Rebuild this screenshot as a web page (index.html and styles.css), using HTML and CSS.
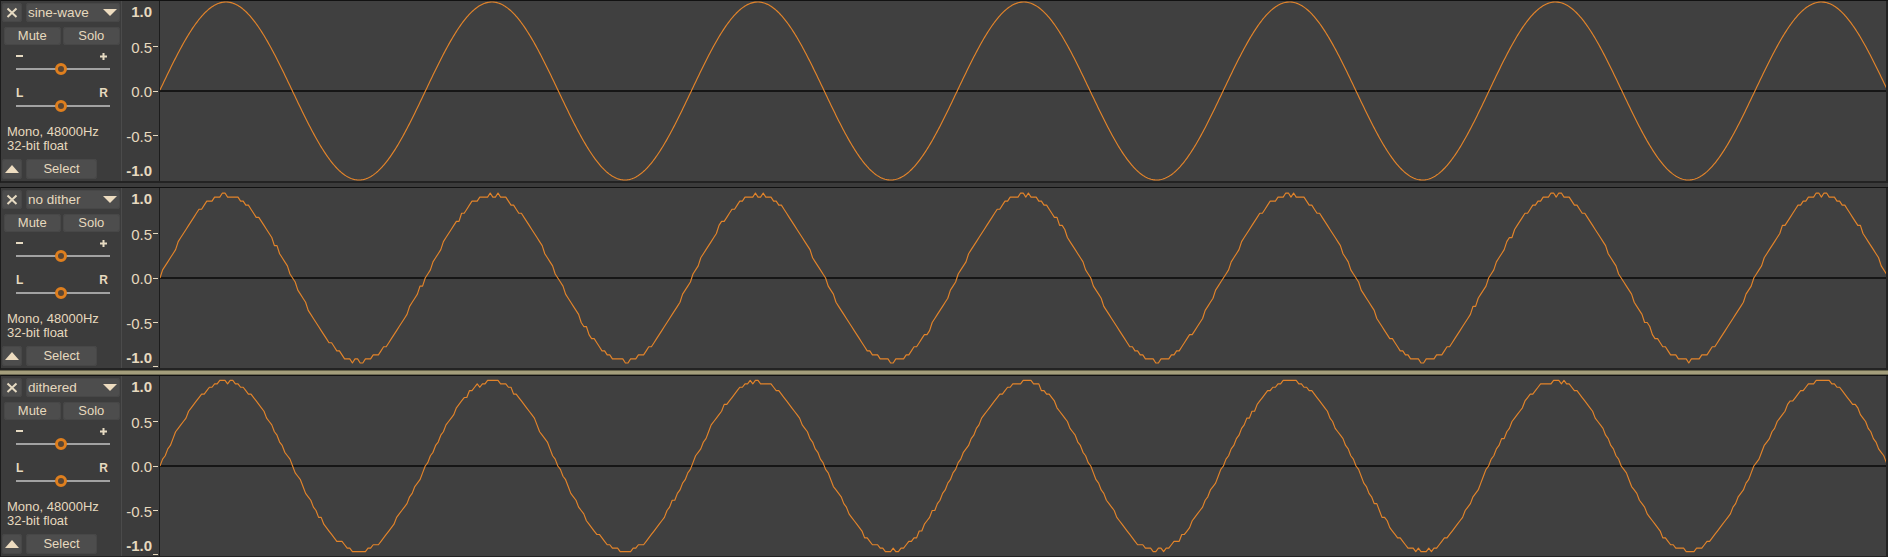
FILE: index.html
```html
<!DOCTYPE html>
<html>
<head>
<meta charset="utf-8">
<link rel="stylesheet" href="styles.css">
</head>
<body>
<div class="tracks">

  <div class="track">
    <div class="info">
      <div class="row row-top">
        <div class="btn close"><svg width="20" height="19" viewBox="0 0 20 19"><path d="M5.5 5.5 L14.5 14 M14.5 5.5 L5.5 14" stroke="#e6dac2" stroke-width="2" fill="none"/></svg></div>
        <div class="btn name"><span class="name-text">sine-wave</span><svg class="dd" width="14" height="8" viewBox="0 0 14 8"><polygon points="0,0 14,0 7,7" fill="#eddcc0"/></svg></div>
      </div>
      <div class="row row-ms">
        <div class="btn ms">Mute</div>
        <div class="btn ms solo">Solo</div>
      </div>
      <div class="slider-labels gain-labels">
        <svg width="7" height="2"><rect width="7" height="2" fill="#e6dac2"/></svg>
        <svg width="7" height="7"><rect y="2.5" width="7" height="2" fill="#e6dac2"/><rect x="2.5" width="2" height="7" fill="#e6dac2"/></svg>
      </div>
      <div class="slider"><div class="bar"></div><span class="thumb"></span></div>
      <div class="slider-labels pan-labels"><span>L</span><span>R</span></div>
      <div class="slider"><div class="bar"></div><span class="thumb"></span></div>
      <div class="fmt">Mono, 48000Hz<br>32-bit float</div>
      <div class="row row-bottom">
        <div class="btn collapse"><svg width="14" height="8" viewBox="0 0 14 8"><polygon points="0,8 14,8 7,0" fill="#eddcc0"/></svg></div>
        <div class="btn select">Select</div>
      </div>
    </div>
    <div class="vruler">
      <span class="lbl major l-top">1.0</span>
      <span class="lbl l-p5">0.5</span>
      <span class="lbl l-0">0.0</span>
      <span class="lbl l-m5">-0.5</span>
      <span class="lbl major l-bot">-1.0</span>
      <i class="tick t-p5"></i><i class="tick t-0"></i><i class="tick t-m5"></i>
    </div>
    <div class="wave"><svg class="wave-svg" data-type="clean" width="1726" height="180" viewBox="0 0 1726 180"><rect class="zero" x="0" y="89" width="1726" height="2"/><path class="sig" d=""/></svg></div>
  </div>

  <div class="track no-gap">
    <div class="info">
      <div class="row row-top">
        <div class="btn close"><svg width="20" height="19" viewBox="0 0 20 19"><path d="M5.5 5.5 L14.5 14 M14.5 5.5 L5.5 14" stroke="#e6dac2" stroke-width="2" fill="none"/></svg></div>
        <div class="btn name"><span class="name-text">no dither</span><svg class="dd" width="14" height="8" viewBox="0 0 14 8"><polygon points="0,0 14,0 7,7" fill="#eddcc0"/></svg></div>
      </div>
      <div class="row row-ms">
        <div class="btn ms">Mute</div>
        <div class="btn ms solo">Solo</div>
      </div>
      <div class="slider-labels gain-labels">
        <svg width="7" height="2"><rect width="7" height="2" fill="#e6dac2"/></svg>
        <svg width="7" height="7"><rect y="2.5" width="7" height="2" fill="#e6dac2"/><rect x="2.5" width="2" height="7" fill="#e6dac2"/></svg>
      </div>
      <div class="slider"><div class="bar"></div><span class="thumb"></span></div>
      <div class="slider-labels pan-labels"><span>L</span><span>R</span></div>
      <div class="slider"><div class="bar"></div><span class="thumb"></span></div>
      <div class="fmt">Mono, 48000Hz<br>32-bit float</div>
      <div class="row row-bottom">
        <div class="btn collapse"><svg width="14" height="8" viewBox="0 0 14 8"><polygon points="0,8 14,8 7,0" fill="#eddcc0"/></svg></div>
        <div class="btn select">Select</div>
      </div>
    </div>
    <div class="vruler">
      <span class="lbl major l-top">1.0</span>
      <span class="lbl l-p5">0.5</span>
      <span class="lbl l-0">0.0</span>
      <span class="lbl l-m5">-0.5</span>
      <span class="lbl major l-bot">-1.0</span>
      <i class="tick t-p5"></i><i class="tick t-0"></i><i class="tick t-m5"></i><i class="tick t-bot"></i>
    </div>
    <div class="wave"><svg class="wave-svg" data-type="nodither" width="1726" height="180" viewBox="0 0 1726 180"><rect class="zero" x="0" y="89" width="1726" height="2"/><path class="sig" d=""/></svg></div>
  </div>

  <div class="focus-band"></div>

  <div class="track last">
    <div class="info">
      <div class="row row-top">
        <div class="btn close"><svg width="20" height="19" viewBox="0 0 20 19"><path d="M5.5 5.5 L14.5 14 M14.5 5.5 L5.5 14" stroke="#e6dac2" stroke-width="2" fill="none"/></svg></div>
        <div class="btn name"><span class="name-text">dithered</span><svg class="dd" width="14" height="8" viewBox="0 0 14 8"><polygon points="0,0 14,0 7,7" fill="#eddcc0"/></svg></div>
      </div>
      <div class="row row-ms">
        <div class="btn ms">Mute</div>
        <div class="btn ms solo">Solo</div>
      </div>
      <div class="slider-labels gain-labels">
        <svg width="7" height="2"><rect width="7" height="2" fill="#e6dac2"/></svg>
        <svg width="7" height="7"><rect y="2.5" width="7" height="2" fill="#e6dac2"/><rect x="2.5" width="2" height="7" fill="#e6dac2"/></svg>
      </div>
      <div class="slider"><div class="bar"></div><span class="thumb"></span></div>
      <div class="slider-labels pan-labels"><span>L</span><span>R</span></div>
      <div class="slider"><div class="bar"></div><span class="thumb"></span></div>
      <div class="fmt">Mono, 48000Hz<br>32-bit float</div>
      <div class="row row-bottom">
        <div class="btn collapse"><svg width="14" height="8" viewBox="0 0 14 8"><polygon points="0,8 14,8 7,0" fill="#eddcc0"/></svg></div>
        <div class="btn select">Select</div>
      </div>
    </div>
    <div class="vruler">
      <span class="lbl major l-top">1.0</span>
      <span class="lbl l-p5">0.5</span>
      <span class="lbl l-0">0.0</span>
      <span class="lbl l-m5">-0.5</span>
      <span class="lbl major l-bot">-1.0</span>
      <i class="tick t-p5"></i><i class="tick t-0"></i><i class="tick t-m5"></i><i class="tick t-bot"></i>
    </div>
    <div class="wave"><svg class="wave-svg" data-type="dithered" width="1726" height="180" viewBox="0 0 1726 180"><rect class="zero" x="0" y="89" width="1726" height="2"/><path class="sig" d=""/></svg></div>
  </div>

</div>
<script src="script.js"></script>
</body>
</html>
```

FILE: styles.css
```css
html, body {
  margin: 0;
  padding: 0;
  width: 1888px;
  height: 557px;
  overflow: hidden;
  background: #3b3b3b;
  font-family: "Liberation Sans", Arial, sans-serif;
  color: #e6d9bf;
}

.tracks {
  display: flex;
  flex-direction: column;
}

.track {
  display: flex;
  height: 180px;
  border-top: 1px solid #121212;
  border-bottom: 2px solid #232323;
  border-left: 1px solid #1c1c1c;
  margin-bottom: 4px;
  flex: none;
}
.track.no-gap { margin-bottom: 0; }
.track.last { margin-bottom: 0; }

.focus-band {
  height: 5px;
  flex: none;
  background: linear-gradient(#66634b 0, #66634b 1px, #a49e7c 1px, #a49e7c 4px, #6c6952 4px);
}

/* ---------- track info panel ---------- */
.info {
  width: 120px;
  flex: none;
  background: #3c3c3c;
  display: flex;
  flex-direction: column;
  box-sizing: border-box;
  padding: 0 1px 2px 1px;
}

.row { display: flex; }
.row-top { margin-top: 2px; height: 19px; gap: 4px; }
.row-ms { margin-top: 5px; height: 18px; gap: 2px; padding-left: 2px; }
.row-bottom { margin-top: auto; height: 20px; gap: 4px; }

.btn {
  background: #4d4d4d;
  border-radius: 3px;
  box-shadow: inset 0 0 0 1px #474747;
  box-sizing: border-box;
  font-size: 13px;
  color: #e6d9bf;
  display: flex;
  align-items: center;
  justify-content: center;
}
.close { width: 20px; }
.name {
  flex: 1;
  justify-content: space-between;
  padding: 0 3px 0 2px;
  font-size: 13.5px;
  line-height: 19px;
}
.name-text { white-space: nowrap; }
.ms { line-height: 18px; width: 57px; }
.ms.solo { width: 58px; }
.collapse { width: 20px; }
.select { width: 71px; line-height: 20px; }

.slider-labels {
  display: flex;
  justify-content: space-between;
  align-items: center;
  height: 12px;
  padding: 0 13px 0 14px;
}
.gain-labels { margin-top: 5px; }
.pan-labels {
  margin-top: 11px;
  font-size: 12px;
  font-weight: bold;
  line-height: 12px;
  padding: 0 12px 0 14px;
}

.slider {
  position: relative;
  height: 14px;
  display: flex;
  align-items: center;
  padding: 0 10px 0 14px;
}
.bar {
  flex: 1;
  height: 2px;
  background: #a2a2a2;
}
.thumb {
  position: absolute;
  left: 53px;
  top: 1px;
  width: 12px;
  height: 12px;
  box-sizing: border-box;
  border-radius: 50%;
  border: 3.5px solid #df7f1e;
  background: #5a4634;
}

.fmt {
  margin-top: 12px;
  font-size: 13px;
  line-height: 14px;
  padding-left: 5px;
  white-space: nowrap;
}

/* ---------- vertical ruler ---------- */
.vruler {
  position: relative;
  width: 37px;
  flex: none;
  background: #3c3c3c;
  border-left: 1px solid #4b4b4b;
  border-right: 1px solid #1c1c1c;
}
.lbl {
  position: absolute;
  right: 7px;
  font-size: 15px;
  line-height: 15px;
  white-space: nowrap;
}
.lbl.major { font-weight: bold; }
.l-top { top: 3px; }
.l-p5 { top: 39px; }
.l-0 { top: 83px; }
.l-m5 { top: 128px; }
.l-bot { top: 162px; }
.tick {
  position: absolute;
  left: 31px;
  width: 5px;
  height: 1px;
  background: #e6d9bf;
}
.t-p5 { top: 45px; }
.t-0 { top: 90px; }
.t-m5 { top: 134px; }
.t-bot { top: 178px; }

/* ---------- waveform ---------- */
.wave {
  width: 1726px;
  flex: none;
  background: #404040;
  border-right: 2px solid #232323;
}
.wave-svg { display: block; }
.zero { fill: #161616; }
.sig {
  fill: none;
  stroke: #e3842a;
  stroke-width: 1.15;
  stroke-linejoin: round;
}
```

FILE: script.js
```js
(function () {
  var W = 1726, CY = 90, AMP = 89, PERIOD = 265.9;
  var seed = 987654;
  function rnd() {
    seed = (seed * 1103515245 + 12345) % 2147483648;
    return seed / 2147483648;
  }
  document.querySelectorAll('svg.wave-svg').forEach(function (svg) {
    var type = svg.getAttribute('data-type');
    var d = [];
    var step = type === 'clean' ? 1 : 2.6;
    for (var x = 0; x <= W + step; x += step) {
      var s = Math.sin(2 * Math.PI * (x + 0.5) / PERIOD);
      var v;
      if (type === 'nodither') {
        var n = 22;
        v = Math.round(s * 0.935 * n + 0.18 * Math.sin(x * 0.71)) / n;
      } else if (type === 'dithered') {
        var m = 26;
        v = Math.round(s * 0.955 * m + (rnd() - 0.5) * 0.75) / m;
      } else {
        v = s;
      }
      var y = CY - v * AMP;
      d.push((d.length === 0 ? 'M' : 'L') + x.toFixed(2) + ',' + y.toFixed(2));
    }
    svg.querySelector('path.sig').setAttribute('d', d.join(' '));
  });
})();
```
